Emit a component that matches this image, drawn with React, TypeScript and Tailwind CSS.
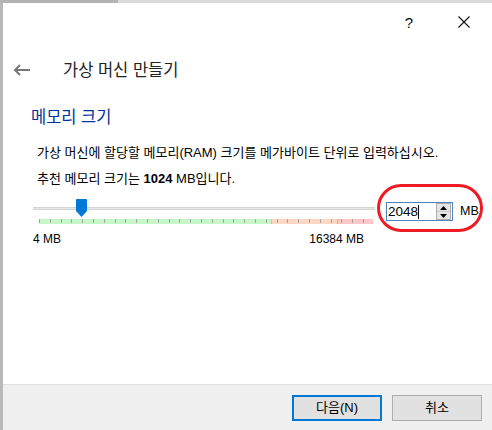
const ticks = Array.from({ length: 31 });

function Spinner() {
  return (
    <div className="w-[15px] h-[17px] border border-[#adadad] bg-[#e5e5e5] flex flex-col">
      <div className="flex-1 flex items-center justify-center border-b border-[#c8c8c8]">
        <svg width="7" height="4" viewBox="0 0 7 4">
          <path d="M0 4 L3.5 0 L7 4 Z" fill="#000" />
        </svg>
      </div>
      <div className="flex-1 flex items-center justify-center">
        <svg width="7" height="4" viewBox="0 0 7 4">
          <path d="M0 0 L3.5 4 L7 0 Z" fill="#000" />
        </svg>
      </div>
    </div>
  );
}

export default function App() {
  return (
    <div className="w-[492px] h-[430px] flex flex-col bg-white overflow-hidden text-black font-['Liberation_Sans','Noto_Sans_CJK_KR',sans-serif]">
      {/* window edge */}
      <div className="h-[3px] flex shrink-0">
        <div className="w-[118px] bg-[#b3b3b3]" />
        <div className="flex-1 bg-[#dadada]" />
      </div>
      <div className="flex-1 flex min-h-0">
        <div className="w-[3px] bg-[#b9b9b9] shrink-0" />
        <div className="flex-1 flex flex-col">
          {/* caption buttons */}
          <div className="h-[38px] flex items-center justify-end">
            <span className="w-[20px] text-center text-[15px] leading-none text-[#111]">?</span>
            <div className="w-[39px]" />
            <svg width="12" height="12" viewBox="0 0 12 12" className="mr-[22px]">
              <path d="M0.5 0.5 L11.5 11.5 M11.5 0.5 L0.5 11.5" stroke="#111" strokeWidth="1.1" />
            </svg>
          </div>

          {/* header */}
          <div className="h-[58px] flex items-center pl-[10px]">
            <svg width="18" height="12" viewBox="0 0 18 12">
              <path d="M17 6 H2 M7 1 L2 6 L7 11" stroke="#777" strokeWidth="2" fill="none" />
            </svg>
            <span className="ml-[32px] text-[16.5px] leading-none text-[#222]">가상 머신 만들기</span>
          </div>

          <div className="h-[36px] flex items-center pl-[28px] text-[16.5px] text-[#003399]">메모리 크기</div>

          <div className="mt-[5px] pl-[34px] text-[13px] leading-[26px]">
            <div>가상 머신에 할당할 메모리(RAM) 크기를 메가바이트 단위로 입력하십시오.</div>
            <div>
              추천 메모리 크기는 <b>1024</b> MB입니다.
            </div>
          </div>

          {/* slider row */}
          <div className="mt-[-8px] flex items-start pl-[30px]">
            <div className="w-[342px] pt-[23px] flex flex-col">
              <div className="relative h-[3px] bg-[#e7e7e7] border-y border-[#d4d4d4]">
                <svg width="11" height="18" viewBox="0 0 11 18" className="absolute left-[43px] top-[-9px]">
                  <path d="M0 1 Q0 0 1 0 H10 Q11 0 11 1 V12 L5.5 18 L0 12 Z" fill="#0078d7" />
                </svg>
              </div>
              <div className="relative ml-[6px] mt-[9px] w-[334px] h-[5px] flex">
                <div className="w-[232px] bg-[#c6f7c6]" />
                <div className="w-[66px] bg-[#ffd7c3] border-l border-[#e0b8a5]" />
                <div className="flex-1 bg-[#ffc6c6] border-l border-[#e0a6a6]" />
                <div className="absolute left-0 top-0 w-[325px] h-[4px] flex justify-between">
                  {ticks.map((_, i) => (
                    <div key={i} className="w-[1px] h-full bg-[#a3a3a3]" />
                  ))}
                </div>
              </div>
              <div className="mt-[8px] pr-[11px] flex justify-between text-[12px] leading-[14px]">
                <span>4 MB</span>
                <span>16384 MB</span>
              </div>
            </div>

            <div className="ml-[2px] w-[106px] h-[48px] border-[3px] border-[#ed1c24] rounded-[24px] flex items-start pt-[15px] pl-[6px]">
              <div className="w-[67px] h-[19px] border border-[#4f83c4] bg-white flex items-center pl-[1px] pr-[1px]">
                <span className="text-[13.5px] leading-none">2048</span>
                <div className="w-[1px] h-[14px] bg-black" />
                <div className="flex-1" />
                <Spinner />
              </div>
              <span className="ml-[7px] mt-[2px] text-[12.5px] leading-[14px]">MB</span>
            </div>
          </div>

          {/* footer */}
          <div className="mt-auto h-[46px] border-t border-[#dfdfdf] bg-[#f0f0f0] flex justify-end items-start pt-[10px] pr-[10px] gap-[10px]">
            <button className="w-[90px] h-[26px] border-2 border-[#0078d7] bg-[#e1e1e1] text-[13px]">다음(N)</button>
            <button className="w-[90px] h-[26px] border border-[#adadad] bg-[#e1e1e1] text-[13px]">취소</button>
          </div>
        </div>
      </div>
    </div>
  );
}
